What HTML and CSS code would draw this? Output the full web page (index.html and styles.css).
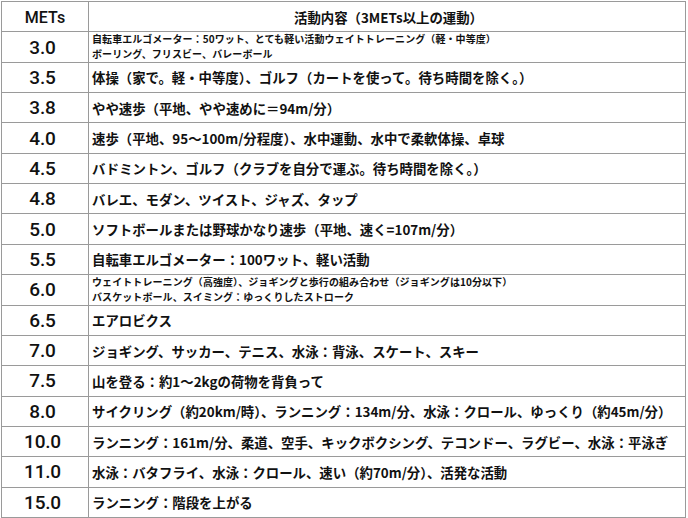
FILE: index.html
```html
<!DOCTYPE html>
<html lang="ja">
<head>
<meta charset="utf-8">
<title>METs表</title>
<link rel="stylesheet" href="styles.css">
</head>
<body>
<div class="mets-table">
  <div class="cell head num">METs</div>
  <div class="cell head text">活動内容（3METs以上の運動）</div>

  <div class="cell num">3.0</div>
  <div class="cell text small"><span class="line">自転車エルゴメーター：50ワット、とても軽い活動ウェイトトレーニング（軽・中等度）</span><span class="line">ボーリング、フリスビー、バレーボール</span></div>

  <div class="cell num">3.5</div>
  <div class="cell text">体操（家で。軽・中等度）、ゴルフ（カートを使って。待ち時間を除く。）</div>

  <div class="cell num">3.8</div>
  <div class="cell text">やや速歩（平地、やや速めに＝94m/分）</div>

  <div class="cell num">4.0</div>
  <div class="cell text">速歩（平地、95～100m/分程度）、水中運動、水中で柔軟体操、卓球</div>

  <div class="cell num">4.5</div>
  <div class="cell text">バドミントン、ゴルフ（クラブを自分で運ぶ。待ち時間を除く。）</div>

  <div class="cell num">4.8</div>
  <div class="cell text">バレエ、モダン、ツイスト、ジャズ、タップ</div>

  <div class="cell num">5.0</div>
  <div class="cell text">ソフトボールまたは野球かなり速歩（平地、速く=107m/分）</div>

  <div class="cell num">5.5</div>
  <div class="cell text">自転車エルゴメーター：100ワット、軽い活動</div>

  <div class="cell num">6.0</div>
  <div class="cell text small"><span class="line">ウェイトトレーニング（高強度）、ジョギングと歩行の組み合わせ（ジョギングは10分以下）</span><span class="line">バスケットボール、スイミング：ゆっくりしたストローク</span></div>

  <div class="cell num">6.5</div>
  <div class="cell text">エアロビクス</div>

  <div class="cell num">7.0</div>
  <div class="cell text">ジョギング、サッカー、テニス、水泳：背泳、スケート、スキー</div>

  <div class="cell num">7.5</div>
  <div class="cell text">山を登る：約1～2kgの荷物を背負って</div>

  <div class="cell num">8.0</div>
  <div class="cell text">サイクリング（約20km/時）、ランニング：134m/分、水泳：クロール、ゆっくり（約45m/分）</div>

  <div class="cell num">10.0</div>
  <div class="cell text">ランニング：161m/分、柔道、空手、キックボクシング、テコンドー、ラグビー、水泳：平泳ぎ</div>

  <div class="cell num">11.0</div>
  <div class="cell text">水泳：バタフライ、水泳：クロール、速い（約70m/分）、活発な活動</div>

  <div class="cell num">15.0</div>
  <div class="cell text">ランニング：階段を上がる</div>
</div>
</body>
</html>
```
FILE: styles.css
```css
html, body {
  margin: 0;
  padding: 0;
  background: #ffffff;
}

body {
  color: #111111;
  font-family: "Noto Sans CJK JP", "Noto Sans", sans-serif;
}

.mets-table {
  box-sizing: border-box;
  margin: 1px 0 0 1px;
  width: 685px;
  height: 517px;
  display: grid;
  grid-template-columns: 87px 1fr;
  grid-template-rows: repeat(17, 1fr);
  border-top: 1px solid #9a9a9a;
  border-left: 1px solid #9a9a9a;
}

.cell {
  box-sizing: border-box;
  border-right: 1px solid #9a9a9a;
  border-bottom: 1px solid #9a9a9a;
  display: flex;
  align-items: center;
  min-width: 0;
  overflow: hidden;
}

.num {
  justify-content: center;
  padding-right: 5px;
  font-family: Roboto, "Liberation Sans", sans-serif;
  font-weight: 500;
  font-size: 19px;
  letter-spacing: -0.2px;
}

.head.num {
  font-size: 16px;
  padding-right: 0;
  padding-top: 1px;
  letter-spacing: 0;
}

.text {
  padding-left: 3px;
  font-size: 13.4px;
  font-weight: 700;
  white-space: nowrap;
  line-height: 16px;
}

.head.text {
  justify-content: center;
}

.small {
  font-size: 10px;
  letter-spacing: 0.08px;
  flex-direction: column;
  align-items: flex-start;
  justify-content: center;
}

.line {
  display: block;
  line-height: 14.6px;
}
```
